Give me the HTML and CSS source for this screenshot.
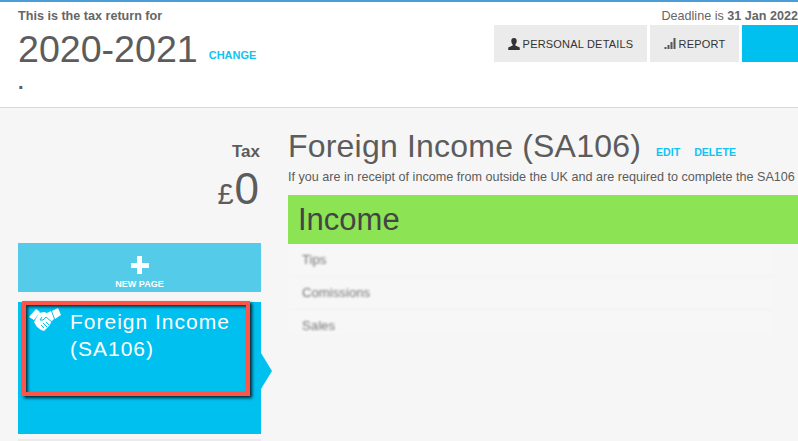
FILE: index.html
```html
<!DOCTYPE html>
<html lang="en">
<head>
    <meta charset="UTF-8">
    <meta name="viewport" content="width=device-width, initial-scale=1.0">
    <title>Tax return 2020-2021</title>
    <link rel="stylesheet" href="styles.css">
</head>
<body>
    <header class="top-bar">
        <div class="return-info">
            <div class="return-label">This is the tax return for</div>
            <div class="return-year-row">
                <span class="return-year">2020-2021</span>
                <a href="#" class="link-action">CHANGE</a>
            </div>
            <div class="return-dot">.</div>
        </div>
        <div class="top-actions">
            <div class="deadline">Deadline is <b>31 Jan 2022</b></div>
            <div class="action-buttons">
                <a href="#" class="action-btn btn-personal">
                    <svg class="btn-icon" width="12" height="12" viewBox="0 0 15 15"><path fill="#333" d="M7.500 0C5.200 0 4.100 1.600 4.100 3.700c0 1.700.7 3.400 1.700 4.400v1.300L.3 12v3h14.400v-3L9.200 9.400V8.100c1-1 1.700-2.700 1.700-4.400C10.900 1.600 9.800 0 7.500 0z"/></svg>
                    PERSONAL DETAILS
                </a>
                <a href="#" class="action-btn btn-report">
                    <svg class="btn-icon" width="12" height="11" viewBox="0 0 11 11"><path fill="#555" d="M0 9h2v2H0zM3 7h2v4H3zM6 4h2v7H6zM9 0h2v11H9z"/></svg>
                    REPORT
                </a>
                <a href="#" class="action-btn btn-blue"></a>
            </div>
        </div>
    </header>

    <div class="page">
        <aside class="sidebar">
            <div class="tax-title">Tax</div>
            <div class="tax-total"><span class="currency">£</span>0</div>
            <a href="#" class="new-page">
                <span class="plus"></span>
                <span class="new-page-label">NEW PAGE</span>
            </a>
            <div class="page-item">
                <svg class="handshake" width="32" height="24" viewBox="0 0 32 24">
                    <path fill="#fff" d="M0 9l7-8 4 3-6 8zM23 3l6-3 3 7-6 4z"/>
                    <path fill="#fff" d="M10 5l5-1 3 1 4-2 3 8-2 2-3 5-3 3-2 2-3-1-4-3-3-5z"/>
                    <path fill="none" stroke="#00c0f0" stroke-width="1" d="M13 9l-2 3 3 0 3-3 7 6M12 17l3 3M14 15l4 4M17 14l3 3"/>
                </svg>
                <div class="page-item-name">Foreign Income (SA106)</div>
                <div class="highlight-box"></div>
            </div>
            <div class="page-item-next"></div>
        </aside>

        <main class="content">
            <div class="page-head">
                <h1>Foreign Income (SA106)</h1>
                <a href="#" class="link-action">EDIT</a>
                <a href="#" class="link-action">DELETE</a>
            </div>
            <p class="page-desc">If you are in receipt of income from outside the UK and are required to complete the SA106</p>
            <div class="section-head">Income</div>
            <ul class="section-rows">
                <li>Tips</li>
                <li>Comissions</li>
                <li>Sales</li>
            </ul>
        </main>
    </div>
</body>
</html>
```

FILE: styles.css
```css
* {
    margin: 0;
    padding: 0;
    box-sizing: border-box;
}

html, body {
    height: 100%;
    overflow: hidden;
}

body {
    font-family: "Liberation Sans", Arial, sans-serif;
    background: #f6f6f6;
    color: #5c5c5c;
}

a {
    text-decoration: none;
}

.top-bar {
    height: 108px;
    display: flex;
    justify-content: space-between;
    background: #fff;
    border-top: 2px solid #4a9fd8;
    border-bottom: 1px solid #d8d8d8;
    padding-left: 18px;
}

.return-label {
    font-size: 12.6px;
    font-weight: bold;
    line-height: 14px;
    margin-top: 7px;
    color: #666;
}

.return-year-row {
    display: flex;
    align-items: flex-start;
    gap: 11px;
    margin-top: 4px;
}

.return-year {
    font-size: 37.6px;
    line-height: 44px;
}

.return-year-row .link-action {
    line-height: 13px;
    margin-top: 22px;
}

.return-dot {
    font-size: 20px;
    font-weight: bold;
    line-height: 16px;
    margin-top: 3px;
}

.link-action {
    font-size: 11px;
    font-weight: bold;
    color: #12c2f4;
}

.top-actions {
    width: 304px;
    flex-shrink: 0;
}

.deadline {
    font-size: 12.6px;
    line-height: 14px;
    margin-top: 7px;
    text-align: right;
    white-space: nowrap;
    color: #666;
}

.action-buttons {
    display: flex;
    gap: 3px;
    margin-top: 2px;
}

.action-btn {
    height: 37px;
    display: flex;
    align-items: center;
    justify-content: center;
    gap: 3px;
    background: #ebebeb;
    color: #333;
    font-size: 11px;
    letter-spacing: 0.2px;
}

.btn-personal {
    width: 153px;
}

.btn-report {
    width: 89px;
}

.btn-blue {
    width: 56px;
    background: #00c0f0;
}

.page {
    display: flex;
    padding-left: 18px;
}

.sidebar {
    width: 243px;
    flex-shrink: 0;
}

.tax-title {
    font-size: 17px;
    font-weight: bold;
    line-height: 18px;
    margin-top: 35px;
    text-align: right;
    padding-right: 1px;
}

.tax-total {
    font-size: 44px;
    line-height: 50px;
    margin-top: 3px;
    text-align: right;
    padding-right: 2px;
}

.currency {
    font-size: 29px;
    margin-right: 1px;
}

.new-page {
    height: 49px;
    margin-top: 24px;
    display: flex;
    flex-direction: column;
    align-items: center;
    background: #55cbea;
    color: #fff;
}

.plus {
    width: 18px;
    height: 18px;
    margin-top: 13px;
    background:
        linear-gradient(#fff, #fff) center / 18px 5px no-repeat,
        linear-gradient(#fff, #fff) center / 5px 18px no-repeat;
}

.new-page-label {
    font-size: 9px;
    font-weight: bold;
    line-height: 10px;
    margin-top: 5px;
}

.page-item {
    position: relative;
    height: 132px;
    margin-top: 10px;
    display: flex;
    align-items: flex-start;
    background: #00c0f0;
    color: #fff;
}

.page-item::after {
    content: "";
    position: absolute;
    left: 100%;
    top: 51px;
    border-left: 11px solid #00c0f0;
    border-top: 18px solid transparent;
    border-bottom: 18px solid transparent;
}

.handshake {
    margin: 6px 0 0 11px;
    flex-shrink: 0;
}

.page-item-name {
    width: 170px;
    margin: 6px 0 0 9px;
    font-size: 21px;
    line-height: 27px;
    letter-spacing: 1px;
}

.highlight-box {
    position: absolute;
    left: 4px;
    top: -1px;
    width: 228px;
    height: 95px;
    border: 4px solid #ff5548;
    box-shadow: 2px 2px 3px rgba(0, 0, 0, 0.8), inset 2px 2px 3px rgba(0, 0, 0, 0.7);
}

.page-item-next {
    height: 6px;
    margin-top: 5px;
    background: #ebebeb;
}

.content {
    flex: 1;
    min-width: 0;
    margin-left: 27px;
}

.page-head {
    display: flex;
    align-items: flex-start;
    gap: 14px;
    margin-top: 20px;
    white-space: nowrap;
}

.page-head h1 {
    font-size: 32px;
    font-weight: normal;
    line-height: 36px;
    letter-spacing: 0.2px;
    margin-right: 1px;
}

.page-head .link-action {
    font-size: 10.6px;
    line-height: 13px;
    margin-top: 18px;
}

.page-desc {
    font-size: 12.6px;
    line-height: 14px;
    margin-top: 6px;
    white-space: nowrap;
}

.section-head {
    height: 49px;
    margin-top: 11px;
    padding-left: 10px;
    background: #8ce354;
    color: #444;
    font-size: 31px;
    line-height: 49px;
}

.section-rows {
    list-style: none;
    width: 485px;
    background: #f7f7f7;
}

.section-rows li {
    height: 33px;
    padding: 9px 0 0 14px;
    border-bottom: 1px solid #f2f2f2;
    font-size: 13.2px;
    line-height: 14px;
    color: #777;
    filter: blur(0.8px);
}

.section-rows li:last-child {
    height: 24px;
    border-bottom: 0;
}
```
